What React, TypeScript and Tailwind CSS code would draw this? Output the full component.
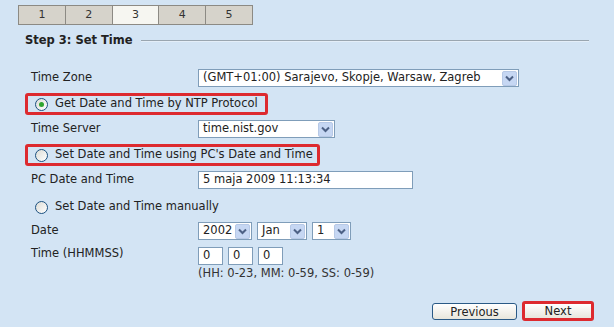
const FONT = "font-['Verdana','DejaVu_Sans',sans-serif]";

function Tabs() {
  const tabs = ["1", "2", "3", "4", "5"];
  return (
    <div className="ml-[18px] mt-[5px] flex h-[20px] w-[235px] border border-[#8c8a84]">
      {tabs.map((t, i) => (
        <div
          key={t}
          className={`flex flex-1 items-center justify-center text-[11px] text-[#333] ${
            i > 0 ? "border-l border-[#8c8a84]" : ""
          } ${t === "3" ? "bg-[#f6f6f1]" : "bg-[#d6d3cb]"}`}
        >
          {t}
        </div>
      ))}
    </div>
  );
}

function Chevron() {
  return (
    <div className="flex h-[15px] w-[15px] shrink-0 items-center justify-center rounded-[2px] border border-[#b7c9e6] bg-[#c6d7f3]">
      <svg width="9" height="7" viewBox="0 0 9 7">
        <path d="M1 1.5 L4.5 5 L8 1.5" fill="none" stroke="#4d6185" strokeWidth="2" />
      </svg>
    </div>
  );
}

function Select({ value, width }: { value: string; width: string }) {
  return (
    <div className={`flex h-[18px] items-center justify-between gap-[2px] border border-[#7f9db9] bg-white pl-[4px] pr-[1px] ${width}`}>
      <span className="whitespace-nowrap text-[11.5px] text-[#222]">{value}</span>
      <Chevron />
    </div>
  );
}

function TextBox({ value, width }: { value: string; width: string }) {
  return (
    <div className={`flex h-[18px] items-center border border-[#7f9db9] bg-white pl-[4px] text-[11.5px] text-[#222] ${width}`}>
      {value}
    </div>
  );
}

function Radio({ checked }: { checked?: boolean }) {
  return (
    <div className="flex h-[13px] w-[13px] items-center justify-center rounded-full border border-[#1c5180] bg-gradient-to-br from-[#dcdcd6] to-white">
      {checked && <div className="h-[5px] w-[5px] rounded-full bg-[#2fa52f]" />}
    </div>
  );
}

function Row({ label, children, className = "" }: { label: string; children: React.ReactNode; className?: string }) {
  return (
    <div className={`flex items-center ${className}`}>
      <span className="w-[180px] pl-[13px] text-[11.5px] text-[#222]">{label}</span>
      {children}
    </div>
  );
}

function RadioBox({ label, checked, boxed, width }: { label: string; checked?: boolean; boxed?: boolean; width?: string }) {
  return (
    <div
      className={`flex h-[22px] items-center gap-[7px] pl-[7px] text-[11.5px] text-[#222] ${
        boxed ? `rounded-[3px] border-[3px] border-[#dd2a2f] ${width}` : "border-[3px] border-transparent"
      }`}
    >
      <Radio checked={checked} />
      <span className="whitespace-nowrap">{label}</span>
    </div>
  );
}

export default function App() {
  return (
    <div className={`h-[327px] w-[614px] overflow-hidden bg-[#d3e4f4] ${FONT}`}>
      <Tabs />

      <div className="ml-[25px] mt-[6px] flex h-[19px] items-center gap-[8px]">
        <span className="text-[11.5px] font-bold text-[#222]">Step 3: Set Time</span>
        <div className="h-[2px] w-[448px] border-t border-b border-t-[#9aa6b0] border-b-[#e4eef8]" />
      </div>

      <div className="ml-[18px] mt-[19px] flex flex-col">
        <Row label="Time Zone">
          <Select value="(GMT+01:00) Sarajevo, Skopje, Warsaw, Zagreb" width="w-[321px]" />
        </Row>

        <div className="ml-[7px] mt-[6px] flex">
          <RadioBox label="Get Date and Time by NTP Protocol" checked boxed width="w-[243px]" />
        </div>

        <Row label="Time Server" className="mt-[5px]">
          <Select value="time.nist.gov" width="w-[137px]" />
        </Row>

        <div className="ml-[7px] mt-[6px] flex">
          <RadioBox label="Set Date and Time using PC's Date and Time" boxed width="w-[295px]" />
        </div>

        <Row label="PC Date and Time" className="mt-[5px]">
          <TextBox value="5 maja 2009 11:13:34" width="w-[215px]" />
        </Row>

        <div className="ml-[7px] mt-[7px] flex">
          <RadioBox label="Set Date and Time manually" />
        </div>

        <Row label="Date" className="mt-[4px]">
          <div className="flex gap-[5px]">
            <Select value="2002" width="w-[54px]" />
            <Select value="Jan" width="w-[50px]" />
            <Select value="1" width="w-[39px]" />
          </div>
        </Row>

        <div className="mt-[7px] flex items-start">
          <span className="w-[180px] pl-[13px] text-[11.5px] leading-[12px] text-[#222]">Time (HHMMSS)</span>
          <div className="flex flex-col">
            <div className="flex gap-[5px]">
              <TextBox value="0" width="w-[25px]" />
              <TextBox value="0" width="w-[25px]" />
              <TextBox value="0" width="w-[25px]" />
            </div>
            <span className="mt-[1px] text-[11.5px] leading-[14px] text-[#333]">(HH: 0-23, MM: 0-59, SS: 0-59)</span>
          </div>
        </div>
      </div>

      <div className="mr-[20px] mt-[21px] flex items-center justify-end gap-[5px]">
        <button className="h-[17px] w-[85px] rounded-[3px] border border-[#2a5a86] bg-gradient-to-b from-white to-[#e8e6dc] text-[11.5px] text-[#222]">
          Previous
        </button>
        <div className="rounded-[3px] border-[3px] border-[#dd2a2f]">
          <button className="block h-[14px] w-[66px] bg-gradient-to-b from-white to-[#e8e6dc] text-[11.5px] leading-[14px] text-[#222]">
            Next
          </button>
        </div>
      </div>
    </div>
  );
}
